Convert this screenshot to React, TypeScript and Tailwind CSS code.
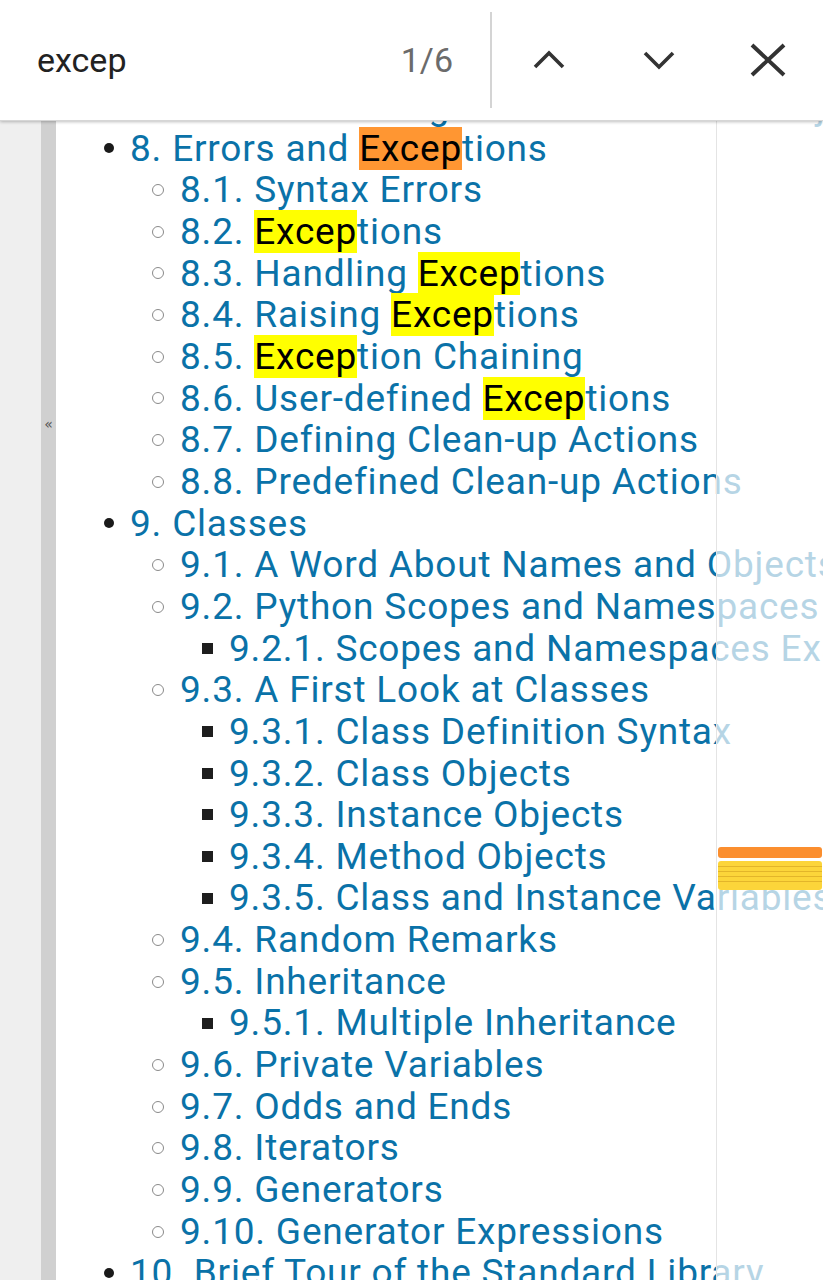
import React from "react";

type Item = { level: 1 | 2 | 3; text: string };

const items: Item[] = [
  { level: 3, text: "7.2.2. Saving structured data with json" },
  { level: 1, text: "8. Errors and Exceptions" },
  { level: 2, text: "8.1. Syntax Errors" },
  { level: 2, text: "8.2. Exceptions" },
  { level: 2, text: "8.3. Handling Exceptions" },
  { level: 2, text: "8.4. Raising Exceptions" },
  { level: 2, text: "8.5. Exception Chaining" },
  { level: 2, text: "8.6. User-defined Exceptions" },
  { level: 2, text: "8.7. Defining Clean-up Actions" },
  { level: 2, text: "8.8. Predefined Clean-up Actions" },
  { level: 1, text: "9. Classes" },
  { level: 2, text: "9.1. A Word About Names and Objects" },
  { level: 2, text: "9.2. Python Scopes and Namespaces" },
  { level: 3, text: "9.2.1. Scopes and Namespaces Example" },
  { level: 2, text: "9.3. A First Look at Classes" },
  { level: 3, text: "9.3.1. Class Definition Syntax" },
  { level: 3, text: "9.3.2. Class Objects" },
  { level: 3, text: "9.3.3. Instance Objects" },
  { level: 3, text: "9.3.4. Method Objects" },
  { level: 3, text: "9.3.5. Class and Instance Variables" },
  { level: 2, text: "9.4. Random Remarks" },
  { level: 2, text: "9.5. Inheritance" },
  { level: 3, text: "9.5.1. Multiple Inheritance" },
  { level: 2, text: "9.6. Private Variables" },
  { level: 2, text: "9.7. Odds and Ends" },
  { level: 2, text: "9.8. Iterators" },
  { level: 2, text: "9.9. Generators" },
  { level: 2, text: "9.10. Generator Expressions" },
  { level: 1, text: "10. Brief Tour of the Standard Library" },
  { level: 2, text: "10.1. Operating System Interface" },
];

const rowIndent = { 1: "pl-[44px]", 2: "pl-[94px]", 3: "pl-[143px]" };

function Marker({ level }: { level: 1 | 2 | 3 }) {
  if (level === 1)
    return <span className="ml-[4px] w-[10px] h-[10px] rounded-full bg-[#1a1a1a]" />;
  if (level === 2)
    return <span className="ml-[2px] w-[12px] h-[12px] rounded-full border border-[#8a8a8a]" />;
  return <span className="ml-[3px] w-[11px] h-[11px] bg-[#1e1e1e]" />;
}

function Highlighted({ text, active }: { text: string; active: boolean }) {
  const i = text.indexOf("Excep");
  if (i < 0) return <>{text}</>;
  return (
    <>
      {text.slice(0, i)}
      <span className={active ? "bg-[#ff9632] text-black" : "bg-[#ffff00] text-black"}>Excep</span>
      {text.slice(i + 5)}
    </>
  );
}

export default function App() {
  let matchNo = 0;
  return (
    <div className="w-[823px] h-[1280px] overflow-hidden bg-white font-['Roboto',sans-serif]">
      <header className="relative z-10 h-[121px] flex items-center bg-white shadow-[0_1px_3px_rgba(0,0,0,0.25)] border-b border-[#d6d6d6]">
        <span className="ml-[37px] text-[34px] text-[#222] leading-none">excep</span>
        <span className="ml-auto mr-[37px] text-[34px] text-[#6b6b6b] leading-none">1/6</span>
        <div className="self-stretch my-[12px] w-[2px] bg-[#d4d4d4]" />
        <div className="flex items-center">
          <svg width="110" height="40" viewBox="0 0 110 40" className="ml-[1px]">
            <polyline points="42,27 56,13 70,27" fill="none" stroke="#333" strokeWidth="3.6" />
          </svg>
          <svg width="110" height="40" viewBox="0 0 110 40">
            <polyline points="42,13 56,27 70,13" fill="none" stroke="#333" strokeWidth="3.6" />
          </svg>
          <svg width="110" height="40" viewBox="0 0 110 40">
            <path d="M39 5 L71 35 M71 5 L39 35" fill="none" stroke="#333" strokeWidth="4" />
          </svg>
        </div>
      </header>

      <div className="flex h-[1159px]">
        <div className="w-[41px] bg-[#efefef]" />
        <div className="w-[15px] bg-[#d0d0d0] flex justify-center pt-[296px]">
          <span className="text-[14px] leading-none text-[#555] font-['DejaVu_Sans',sans-serif]">«</span>
        </div>
        <div className="relative flex-1 overflow-hidden">
          <ul className="-mt-[35px] text-[37px] leading-[41.65px] tracking-[0.8px] text-[#0a72a8]">
            {items.map((it, k) => {
              const has = it.text.includes("Excep");
              const active = has && matchNo++ === 0;
              return (
                <li key={k} className={`flex items-center whitespace-nowrap ${rowIndent[it.level]}`}>
                  <span className="w-[30px] shrink-0 flex items-center">
                    <Marker level={it.level} />
                  </span>
                  <span>
                    <Highlighted text={it.text} active={active} />
                  </span>
                </li>
              );
            })}
          </ul>

          <div className="absolute top-0 bottom-0 right-0 w-[107px] bg-white/70 border-l border-[#e4e4e4]">
            <div className="mt-[726px] mx-[1px] h-[11px] rounded-[3px] bg-[#fb8e2e]" />
            <div className="mt-[3px] mx-[1px] rounded-[3px] overflow-hidden bg-[#fcd53a] flex flex-col">
              <div className="h-[6px] border-b border-[#e3b52a]" />
              <div className="h-[5px] border-b border-[#e3b52a]" />
              <div className="h-[5px] border-b border-[#e3b52a]" />
              <div className="h-[5px] border-b border-[#e3b52a]" />
              <div className="h-[8px]" />
            </div>
          </div>
        </div>
      </div>
    </div>
  );
}
